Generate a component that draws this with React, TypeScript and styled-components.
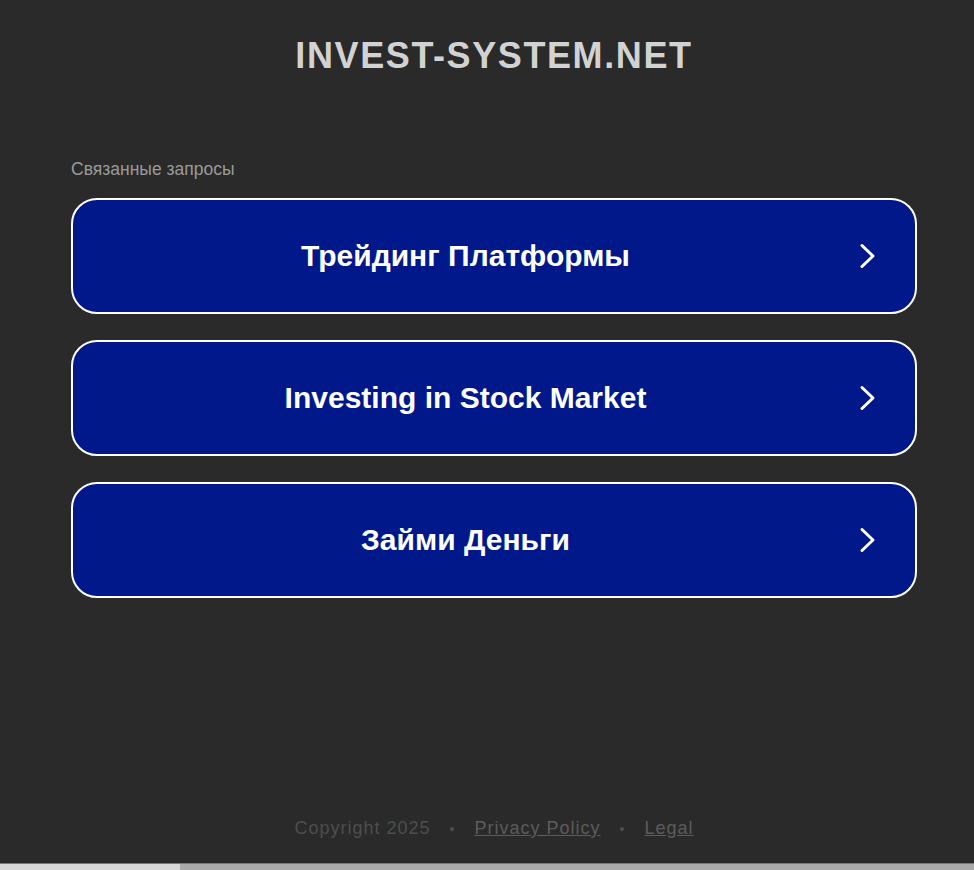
import React from "react";
import styled, { createGlobalStyle } from "styled-components";

const GlobalStyle = createGlobalStyle`
  html, body {
    margin: 0;
    padding: 0;
    background-color: #2a2a2a;
  }
`;

const Page = styled.div`
  height: 870px;
  display: flex;
  flex-direction: column;
  font-family: "Liberation Sans", Arial, sans-serif;
  overflow: hidden;
`;

const Header = styled.h1`
  margin: 0;
  padding: 35px 0 0 14px;
  height: 45px;
  text-align: center;
  font-size: 36px;
  font-weight: 700;
  letter-spacing: 1.6px;
  color: #d2d2d2;
`;

const Content = styled.section`
  flex: 1;
  padding: 79px 57px 0 71px;
  display: flex;
  flex-direction: column;
`;

const Caption = styled.div`
  font-size: 17.5px;
  color: #9a9a9a;
  margin-bottom: 18px;
`;

const List = styled.div`
  display: flex;
  flex-direction: column;
  gap: 26px;
`;

const LinkButton = styled.a`
  height: 112px;
  box-sizing: content-box;
  border: 2px solid #ffffff;
  border-radius: 26px;
  background-color: #00188a;
  display: flex;
  align-items: center;
  padding: 0 37px 0 0;
  text-decoration: none;
  cursor: pointer;
`;

const Label = styled.span`
  flex: 1;
  text-align: center;
  font-size: 30px;
  font-weight: 700;
  color: #ffffff;
`;

const Footer = styled.footer`
  display: flex;
  justify-content: center;
  align-items: center;
  gap: 19px;
  padding: 0 0 24px 14px;
  font-size: 18px;
  letter-spacing: 1px;
  color: #4e4e4e;
`;

const FooterLink = styled.a`
  color: #5c5c5c;
  text-decoration: underline;
`;

const Dot = styled.span`
  font-size: 14px;
`;

const BottomStrip = styled.div`
  height: 6px;
  background: linear-gradient(to right, #d8d8d8 0, #d8d8d8 180px, #aaaaaa 180px);
  border-top: 1px solid #777;
`;

const Chevron = () => (
  <svg width="20" height="26" viewBox="0 0 20 26" fill="none">
    <path d="M4 2.5 L15 13 L4 23.5" stroke="#ffffff" strokeWidth="3" strokeLinecap="round" strokeLinejoin="round" />
  </svg>
);

const items = ["Трейдинг Платформы", "Investing in Stock Market", "Займи Деньги"];

export default function App() {
  return (
    <Page>
      <GlobalStyle />
      <Header>INVEST-SYSTEM.NET</Header>
      <Content>
        <Caption>Связанные запросы</Caption>
        <List>
          {items.map((item) => (
            <LinkButton key={item}>
              <Label>{item}</Label>
              <Chevron />
            </LinkButton>
          ))}
        </List>
      </Content>
      <Footer>
        <span>Copyright 2025</span>
        <Dot>•</Dot>
        <FooterLink>Privacy Policy</FooterLink>
        <Dot>•</Dot>
        <FooterLink>Legal</FooterLink>
      </Footer>
      <BottomStrip />
    </Page>
  );
}
